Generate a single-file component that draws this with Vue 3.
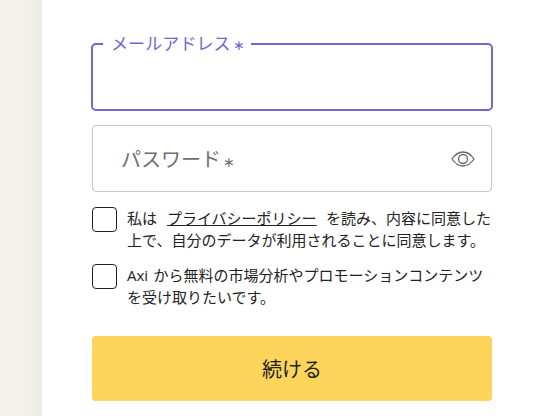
<script setup>
const consents = [
  { id: 'privacy', pre: '私は ', link: 'プライバシーポリシー', post: ' を読み、内容に同意した上で、自分のデータが利用されることに同意します。' },
  { id: 'promo', pre: 'Axi から無料の市場分析やプロモーションコンテンツを受け取りたいです。', link: '', post: '' }
]
</script>

<template>
  <div class="page">
    <aside class="strip"></aside>
    <main class="panel">
      <form class="form" @submit.prevent>
        <fieldset class="email">
          <legend>メールアドレス<span class="req">∗</span></legend>
        </fieldset>
        <div class="password">
          <span class="placeholder">パスワード<span class="req">∗</span></span>
          <svg class="eye" viewBox="0 0 24 16" width="24" height="16" fill="none" stroke="#666" stroke-width="1.300">
            <path d="M1 8C4 3.600 7.800 1 12 1s8 2.600 11 7c-3 4.400-6.800 7-11 7S4 12.400 1 8Z" />
            <circle cx="12" cy="8" r="4.500" />
          </svg>
        </div>
        <div class="consents">
          <label v-for="c in consents" :key="c.id" class="consent">
            <span class="box"></span>
            <span class="copy">{{ c.pre }}<a v-if="c.link" class="link">{{ c.link }}</a>{{ c.post }}</span>
          </label>
        </div>
        <button class="submit" type="submit">続ける</button>
      </form>
    </main>
  </div>
</template>

<style>
html, body { margin: 0; background: #fff; }
</style>

<style scoped>
.page {
  display: flex;
  width: 540px;
  height: 416px;
  overflow: hidden;
  font-family: "Open Sans", "Noto Sans CJK JP", sans-serif;
  color: #222;
}
.strip {
  width: 42px;
  flex: none;
  background: linear-gradient(90deg, #f3f1ec 0, #f3f1ec 24px, #edebe5 100%);
}
.panel {
  flex: 1;
  background: #fff;
  padding-left: 49px;
}
.form {
  width: 402px;
  display: flex;
  flex-direction: column;
}
.email {
  box-sizing: border-box;
  margin: 32px 0 0;
  padding: 0 0 0 10px;
  width: 402px;
  height: 79px;
  border: 2px solid #6c69cf;
  border-radius: 5px;
}
.email legend {
  padding: 0 6px 0 8px;
  font-size: 17px;
  line-height: 23px;
  letter-spacing: 0.100px;
  color: #6c69cf;
}
.req {
  font-size: 14px;
  margin-left: 2px;
  letter-spacing: 0;
}
.password {
  box-sizing: border-box;
  margin: 14px 1px 0;
  height: 67px;
  padding: 0 16px 0 28px;
  border: 1px solid #c8c8c8;
  border-radius: 4px;
  display: flex;
  align-items: center;
  justify-content: space-between;
}
.placeholder {
  font-size: 20px;
  color: #6f6f6f;
}
.eye { display: block; }
.consents {
  margin: 15px 1px 0;
  display: flex;
  flex-direction: column;
  gap: 13px;
}
.consent {
  display: flex;
  gap: 10px;
  align-items: flex-start;
}
.box {
  box-sizing: border-box;
  flex: none;
  width: 25px;
  height: 25px;
  border: 1px solid #222;
  border-radius: 4px;
}
.copy {
  flex: none;
  width: 368px;
  font-size: 15px;
  line-height: 22px;
  word-spacing: 1.500px;
  white-space: pre-wrap;
}
.link {
  text-decoration: underline;
  padding: 0 4px 0 4.500px;
}
.submit {
  margin: 28px 1px 0;
  height: 65px;
  border: 0;
  border-radius: 4px;
  background: #fdd55a;
  font: inherit;
  font-size: 20px;
  color: #222;
}
</style>
